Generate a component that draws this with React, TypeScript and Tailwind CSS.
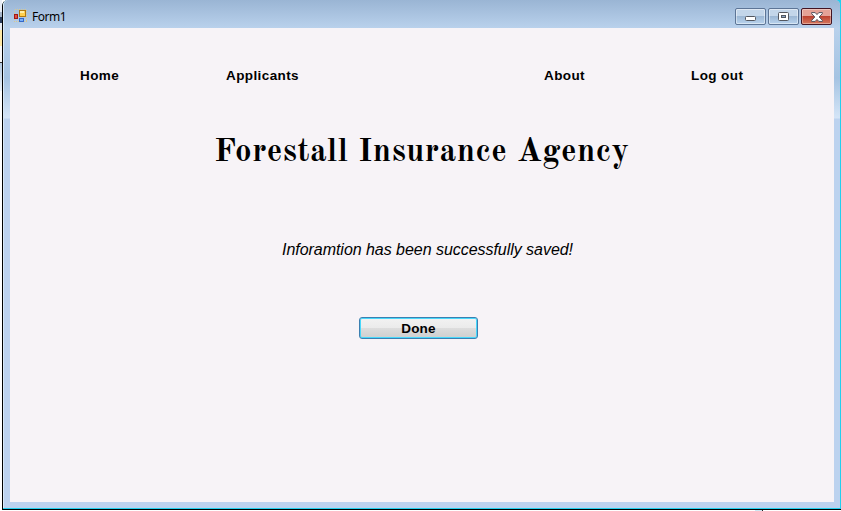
import React from "react";

function AppIcon() {
  return (
    <svg width="14" height="14" viewBox="0 0 14 14" shapeRendering="crispEdges">
      <rect x="0.5" y="0.5" width="12" height="12" fill="none" stroke="#d8c890" strokeDasharray="1 1" />
      <rect x="5" y="1" width="7" height="7" fill="#b07810" />
      <rect x="6" y="2" width="5" height="5" fill="#ffd04e" />
      <rect x="6" y="2" width="4" height="2" fill="#fff0a8" />
      <rect x="0" y="5" width="4" height="5" fill="#a01818" />
      <rect x="1" y="6" width="2" height="3" fill="#e05040" />
      <rect x="5" y="9" width="5" height="4" fill="#3468c8" />
      <rect x="6" y="10" width="3" height="2" fill="#78b0f8" />
    </svg>
  );
}

const captionButton =
  "flex h-[17px] w-[31px] items-center justify-center rounded-[2px] border border-[#5d7596] bg-linear-to-b from-[#c3d6ea] from-45% via-[#9db8d5] via-50% to-[#b9d3ee] shadow-[inset_0_0_0_1px_rgba(255,255,255,0.45)]";

function TitleBar() {
  return (
    <header className="flex h-[28px] shrink-0 items-start rounded-tl-[5px] rounded-tr-[5px] bg-linear-to-b from-[#9ab5d4] to-[#b9d1ec] pl-[10px] pr-[8px]">
      <div className="mt-[9px] w-[14px]"><AppIcon /></div>
      <span className="ml-[4px] mt-[9px] font-['Noto_Sans','Open_Sans',sans-serif] text-[12px] leading-[16px] tracking-[-0.5px] text-black">Form1</span>
      <div className="ml-auto mt-[8px] flex gap-[2px]">
        <button aria-label="Minimize" className={captionButton}>
          <svg width="11" height="5" className="mt-[4px]"><rect x=".5" y=".5" width="10" height="4" rx="1" fill="#fff" stroke="#53575f" /></svg>
        </button>
        <button aria-label="Maximize" className={captionButton}>
          <svg width="11" height="9"><rect x=".5" y=".5" width="10" height="8" rx="1" fill="#fff" stroke="#53575f" /><rect x="3.5" y="3.5" width="4" height="2" fill="#8ba8c8" stroke="#53575f" /></svg>
        </button>
        <button aria-label="Close" className="flex h-[17px] w-[31px] items-center justify-center rounded-[2px] border border-[#431422] bg-linear-to-b from-[#e4a196] from-45% via-[#bd4230] via-50% to-[#d5765e] shadow-[inset_0_0_0_1px_rgba(255,255,255,0.35)]">
          <svg width="12" height="10" viewBox="0 0 12 10"><path d="M.6.6h3.6L6 2.6 7.8.6h3.6v1L8.2 5l3.2 3.4v1H7.8L6 7.4 4.2 9.4H.6v-1L3.8 5 .6 1.6z" fill="#fff" stroke="#53505b" /></svg>
        </button>
      </div>
    </header>
  );
}

export default function App() {
  return (
    <div className="flex h-[511px] w-[841px] overflow-hidden bg-white font-['Liberation_Sans',Arial,sans-serif] text-black">
      <div className="flex w-[2px] shrink-0 flex-col">
        <div className="h-[12px] bg-[#e8edf5]" />
        <div className="h-[5px] bg-[#a9b7ca]" />
        <div className="h-[6px] bg-[#2c3d5b]" />
        <div className="h-[7px] bg-[#e9ecf2]" />
        <div className="h-[16px] bg-[#ffe9a6]" />
        <div className="h-[16px] bg-[#f8f8f8]" />
        <div className="h-px bg-[#333333]" />
        <div className="h-[28px] bg-linear-to-b from-[#b5cae0] to-[#eef4fb]" />
        <div className="flex-1 bg-white" />
      </div>
      <div className="flex w-[839px] flex-col">
        <div className="flex h-[510px] flex-col rounded-tl-[6px] border-b border-l border-black bg-[#22cfee] pb-px pr-px">
          <div className="flex flex-1 flex-col rounded-t-[5px] border-l border-[#d9eaf9] bg-[#bcd2ef]">
            <TitleBar />
            <div className="flex flex-1">
              <div className="w-[6px] bg-[linear-gradient(to_bottom,#b9d1ec_0px,#a5c3e2_50px,#d5e5f7_90px,#bcd2ef_91px)]" />
              <main className="flex h-[474px] w-[824px] flex-col items-start bg-[#f7f3f7]">
                <nav className="flex pl-[70px] pt-[40px] text-[13.5px] font-bold leading-[16px] tracking-[0.4px]">
                  <a className="w-[146px]">Home</a>
                  <a className="w-[318px]">Applicants</a>
                  <a className="w-[147px]">About</a>
                  <a>Log out</a>
                </nav>
                <h1 className="ml-[204px] mt-[45px] whitespace-nowrap font-['Old_Standard_TT','Bodoni_MT','Liberation_Serif',serif] text-[33px] font-bold leading-[48px] tracking-[0.42px]">Forestall Insurance Agency</h1>
                <p className="ml-[272px] mt-[63px] whitespace-nowrap text-[16px] italic leading-[20px] tracking-[-0.04px]">Inforamtion has been successfully saved!</p>
                <button className="ml-[349px] mt-[57px] h-[22px] w-[119px] rounded-[3px] border border-[#3c7fb1] bg-[linear-gradient(to_bottom,#f2f2f2_0%,#ebebeb_48%,#dddddd_50%,#cfcfcf_100%)] pt-px text-[13.5px] font-bold leading-[19px] tracking-[0.2px] shadow-[inset_0_0_0_1px_#48d8fb]">Done</button>
              </main>
              <div className="flex-1 bg-[linear-gradient(to_bottom,#b9d1ec_0px,#a5c3e2_50px,#d5e5f7_90px,#bcd2ef_91px)]" />
            </div>
            <div className="h-[6px] bg-[#bcd2ef]" />
          </div>
        </div>
        <div className="flex h-px bg-white"><div className="ml-[753px] w-[7px] bg-[#cce8f4]" /><div className="w-px bg-[#222222]" /></div>
      </div>
    </div>
  );
}
